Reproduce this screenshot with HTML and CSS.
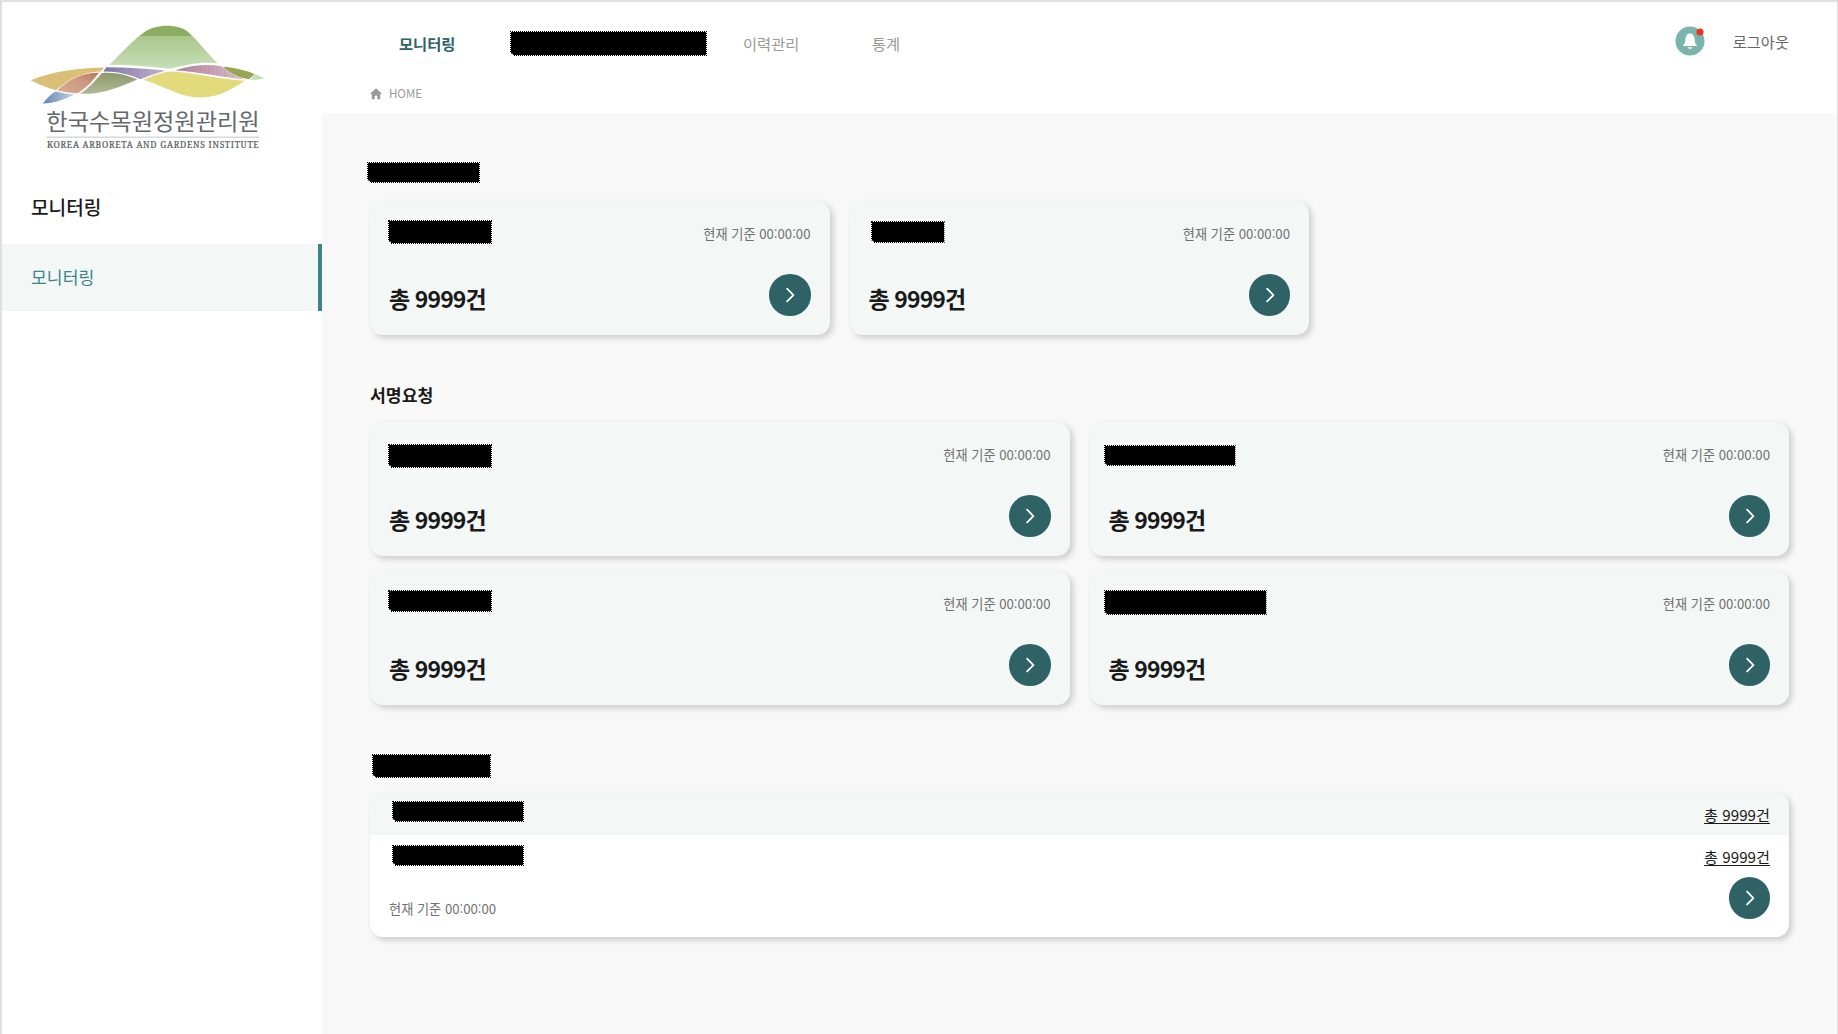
FILE: index.html
```html
<!DOCTYPE html>
<html lang="ko">
<head>
<meta charset="utf-8">
<title>모니터링</title>
<link rel="stylesheet" href="styles.css">
</head>
<body>
<svg class="defs" aria-hidden="true">
  <symbol id="arrow" viewBox="0 0 42 42"><path d="M18.3 14.8 24.7 21.3 18.3 27.8" fill="none" stroke="#fff" stroke-width="1.8" stroke-linecap="round" stroke-linejoin="round"/></symbol>
</svg>
<div class="app">
  <aside class="sidebar">
    <svg class="logo" viewBox="90 70 708 380">
      <defs>
        <linearGradient id="hill" x1="0" y1="0" x2="0" y2="1"><stop offset="0" stop-color="#8aad62"/><stop offset=".24" stop-color="#8aad62"/><stop offset=".24" stop-color="#a9c78b"/><stop offset="1" stop-color="#c7dfb8"/></linearGradient>
        <linearGradient id="violet"><stop offset="0" stop-color="#8474a4"/><stop offset="1" stop-color="#c6b6d8"/></linearGradient>
        <linearGradient id="pink"><stop offset="0" stop-color="#b0829c"/><stop offset="1" stop-color="#dfc0cc"/></linearGradient>
        <linearGradient id="clay" x1="1" y1="0" x2="0" y2="1"><stop offset="0" stop-color="#b9745c"/><stop offset=".4" stop-color="#cc9880"/><stop offset="1" stop-color="#d9ad90"/></linearGradient>
        <linearGradient id="olive" x1="0" y1="0" x2="0" y2="1"><stop offset="0" stop-color="#8e9b6c"/><stop offset="1" stop-color="#b2b894"/></linearGradient>
        <linearGradient id="blue"><stop offset="0" stop-color="#5f85b5"/><stop offset="1" stop-color="#c6d2e6"/></linearGradient>
        <pattern id="stripes" width="8" height="8" patternUnits="userSpaceOnUse"><path d="M1 0V8" stroke="#75628b" stroke-opacity=".25" stroke-width="2"/></pattern>
      </defs>
      <path fill="url(#hill)" d="M328 195C362 162 396 123 432 98C468 71 538 71 568 100C596 123 624 165 654 190C602 185 558 194 512 207C452 201 390 195 328 195Z"/>
      <path fill="#dac077" d="M92 241C154 216 232 204 312 203L303 215C250 216 204 238 168 271C142 264 116 253 92 241Z"/>
      <path fill="url(#clay)" d="M172 271C207 237 252 218 297 219C276 246 257 267 233 280C210 279 191 276 172 271Z"/>
      <path fill="url(#blue)" d="M128 311C143 294 153 282 167 275C187 280 205 283 222 284C193 300 164 310 128 311Z"/>
      <path fill="url(#olive)" d="M240 281C265 267 286 242 305 220C344 216 377 225 412 239C355 263 300 287 240 281Z"/>
      <path fill="url(#violet)" d="M319 202C381 202 437 206 497 212C472 219 446 229 421 238C388 224 353 214 310 215Z"/>
      <path fill="url(#stripes)" d="M319 202C381 202 437 206 497 212C472 219 446 229 421 238C388 224 353 214 310 215Z"/>
      <path fill="url(#pink)" d="M525 211C576 196 620 191 664 199C685 217 710 232 736 239C664 232 594 215 525 211Z"/>
      <path fill="url(#stripes)" d="M525 211C576 196 620 191 664 199C685 217 710 232 736 239C664 232 594 215 525 211Z"/>
      <path fill="#97a557" d="M668 201C706 203 738 213 764 223L747 238C716 235 690 221 668 201Z"/>
      <path fill="#c3dfb5" d="M766 223L794 235C779 239 766 240 750 240Z"/>
      <path fill="#e3da7b" d="M429 240C455 230 481 218 510 215C588 218 654 238 735 243C689 273 655 292 605 293C540 294 487 256 429 240Z"/>
      <text class="logo-ko" x="139" y="391" textLength="640" lengthAdjust="spacingAndGlyphs">한국수목원정원관리원</text>
      <path d="M140 412H778" stroke="#b6b8ba" stroke-width="2.5"/>
      <text class="logo-en" x="141" y="445" textLength="635">KOREA ARBORETA AND GARDENS INSTITUTE</text>
    </svg>
    <h2 class="side-title">모니터링</h2>
    <a class="side-link">모니터링</a>
  </aside>
  <div class="content">
    <header class="header">
      <div class="topbar">
        <nav class="nav">
          <a class="active">모니터링</a>
          <span class="mask mask-nav"></span>
          <a class="history">이력관리</a>
          <a>통계</a>
        </nav>
        <div class="user">
          <svg class="bell" viewBox="0 0 30 30"><circle cx="15" cy="15" r="14.5" fill="#7bb3ad"/><path d="M15 7.3C11.8 7.8 10.6 10.3 10.4 13.2 10.2 16 9.8 17.6 8.2 18.9V20H21.8V18.9C20.2 17.6 19.8 16 19.6 13.2 19.4 10.3 18.2 7.8 15 7.3ZM13 21.2H17.3C17 23.3 13.3 23.3 13 21.2Z" fill="#fff"/><circle cx="25" cy="6" r="3.6" fill="#ea3323"/></svg>
          <a>로그아웃</a>
        </div>
      </div>
      <div class="crumb">
        <svg viewBox="0 0 12 12"><path d="M6 .2 11.7 5.4 10.7 6.3 10.2 5.9V11.3H7.4V7.8H4.6V11.3H1.8V5.9L1.3 6.3.3 5.4Z" fill="#999"/></svg>
        <span>HOME</span>
      </div>
    </header>
    <main class="main">
      <section>
        <div class="section-title"><span class="mask mask-a"></span></div>
        <div class="cards cards-narrow">
          <article class="card"><span class="mask mask-c1"></span><time>현재 기준 00:00:00</time><strong>총 9999건</strong><svg class="go"><use href="#arrow"/></svg></article>
          <article class="card"><span class="mask mask-c2"></span><time>현재 기준 00:00:00</time><strong>총 9999건</strong><svg class="go"><use href="#arrow"/></svg></article>
        </div>
      </section>
      <section>
        <h3 class="section-title">서명요청</h3>
        <div class="cards">
          <article class="card"><span class="mask mask-c3"></span><time>현재 기준 00:00:00</time><strong>총 9999건</strong><svg class="go"><use href="#arrow"/></svg></article>
          <article class="card"><span class="mask mask-c4"></span><time>현재 기준 00:00:00</time><strong>총 9999건</strong><svg class="go"><use href="#arrow"/></svg></article>
          <article class="card"><span class="mask mask-c5"></span><time>현재 기준 00:00:00</time><strong>총 9999건</strong><svg class="go"><use href="#arrow"/></svg></article>
          <article class="card"><span class="mask mask-c6"></span><time>현재 기준 00:00:00</time><strong>총 9999건</strong><svg class="go"><use href="#arrow"/></svg></article>
        </div>
      </section>
      <section>
        <div class="section-title"><span class="mask mask-b"></span></div>
        <div class="list">
          <div class="row tinted"><span class="mask mask-row"></span><a>총 9999건</a></div>
          <div class="row"><span class="mask mask-row"></span><a>총 9999건</a></div>
          <div class="list-foot"><time>현재 기준 00:00:00</time><svg class="go"><use href="#arrow"/></svg></div>
        </div>
      </section>
    </main>
  </div>
</div>
</body>
</html>
```
FILE: styles.css
```css
* { box-sizing: border-box; }
body {
  margin: 0;
  font-family: "Noto Sans CJK KR", sans-serif;
  color: #1a1a1a;
}
h2, h3 { margin: 0; }
svg { display: block; flex: none; }
.defs { display: none; }

.app {
  display: flex;
  height: 1034px;
  border: solid #e0e0e0;
  border-width: 2px 1px 0 2px;
  background: #f8f8f8;
  overflow: hidden;
}
.sidebar { width: 320px; flex: none; background: #fff; }
.content { flex: 1; }

.logo { width: 236px; height: 127px; margin: 21px 0 0 28px; }
.logo-ko { font-size: 68px; fill: #62686c; }
.logo-en { font-family: "Noto Serif", "Liberation Serif", serif; font-size: 25.5px; fill: #565b60; stroke: #565b60; stroke-width: .6px; }
.side-title {
  margin-top: 43px;
  padding-left: 29px;
  font-size: 19.15px;
  font-weight: 500;
  line-height: 28px;
}
.side-link {
  display: flex;
  align-items: center;
  height: 67px;
  margin-top: 23px;
  padding: 0 0 2px 29px;
  border-right: 4px solid #3d8387;
  background: #f3f7f6;
  color: #3d8387;
  font-size: 17.2px;
}

.header { height: 111px; background: #fff; }
.topbar {
  display: flex;
  justify-content: space-between;
  padding: 24px 48px 0 77px;
  font-size: 15.3px;
  line-height: 35px;
}
.nav { display: flex; height: 36px; color: #999; }
.nav .active { width: 111px; color: #2e6265; font-weight: 700; }
.nav .history { width: 129px; margin-left: 36px; }
.user { display: flex; gap: 28px; color: #666; line-height: 31px; }
.bell { width: 30px; height: 30px; }
.crumb {
  display: flex;
  align-items: center;
  gap: 7px;
  padding: 22px 0 0 48px;
  color: #999;
  font-size: 11.5px;
  line-height: 19px;
}
.crumb svg { width: 12px; height: 12px; }

.main { padding: 49px 48px 0; }
section + section { margin-top: 48px; }
section:last-child { margin-top: 50px; }
.section-title {
  height: 39px;
  font-size: 17.2px;
  font-weight: 700;
  line-height: 24px;
}
section:last-child .section-title { height: 38px; }
.cards { display: grid; grid-template-columns: 1fr 1fr; gap: 15px 20px; }
.cards-narrow { width: 939px; }
.card {
  display: grid;
  grid-template-columns: 1fr auto;
  grid-template-rows: 54px 41px;
  height: 134px;
  padding: 19px;
  border-radius: 13px;
  background: #f3f7f6;
  box-shadow: 3px 3px 6px rgba(0, 0, 0, .18);
}
time { color: #707070; font-size: 13.2px; line-height: 28px; }
.card time { justify-self: end; }
.card strong {
  font-size: 23px;
  font-weight: 700;
  line-height: 49px;
  letter-spacing: -.9px;
}
.go {
  justify-self: end;
  width: 41.5px;
  height: 41.5px;
  border-radius: 50%;
  background: #2e6265;
}

.list {
  height: 144px;
  border-radius: 13px;
  background: #fff;
  box-shadow: 3px 3px 6px rgba(0, 0, 0, .18);
  overflow: hidden;
}
.row {
  display: flex;
  justify-content: space-between;
  height: 42px;
  padding: 0 19px 0 22px;
  font-size: 15.2px;
  line-height: 42px;
}
.row.tinted { background: #f3f7f6; }
.row a { text-decoration: underline; text-underline-offset: 2px; }
.list-foot { display: flex; justify-content: space-between; padding: 0 19px; }
.list-foot time { padding-top: 18px; }

/* Blacked-out labels with a rough, perforated edge */
.mask {
  display: block;
  border: 1px dotted #000;
  background: #000 padding-box;
  clip-path: polygon(0 0, 100% 0, 100% 100%, 3px 100%, 3px calc(100% - 2px), 0 calc(100% - 3px));
}
.mask-nav { width: 197px; height: 25px; margin-top: 5px; }
.mask-a { width: 113px; height: 21px; margin-left: -3px; }
.mask-b { width: 119px; height: 24px; margin-left: 2px; position: relative; top: -1px; }
.mask-c1 { width: 104px; height: 24px; margin-left: -1px; }
.mask-c2 { width: 74px; height: 22px; margin: 1px 0 0 2px; }
.mask-c3 { width: 104px; height: 24px; margin: 3px 0 0 -1px; }
.mask-c4 { width: 132px; height: 21px; margin: 4px 0 0 -5px; }
.mask-c5 { width: 104px; height: 22px; margin-left: -1px; }
.mask-c6 { width: 163px; height: 25px; margin-left: -5px; }
.mask-row { width: 132px; height: 21px; margin-top: 8px; }
.row:nth-child(2) .mask { margin-top: 10px; }
```
